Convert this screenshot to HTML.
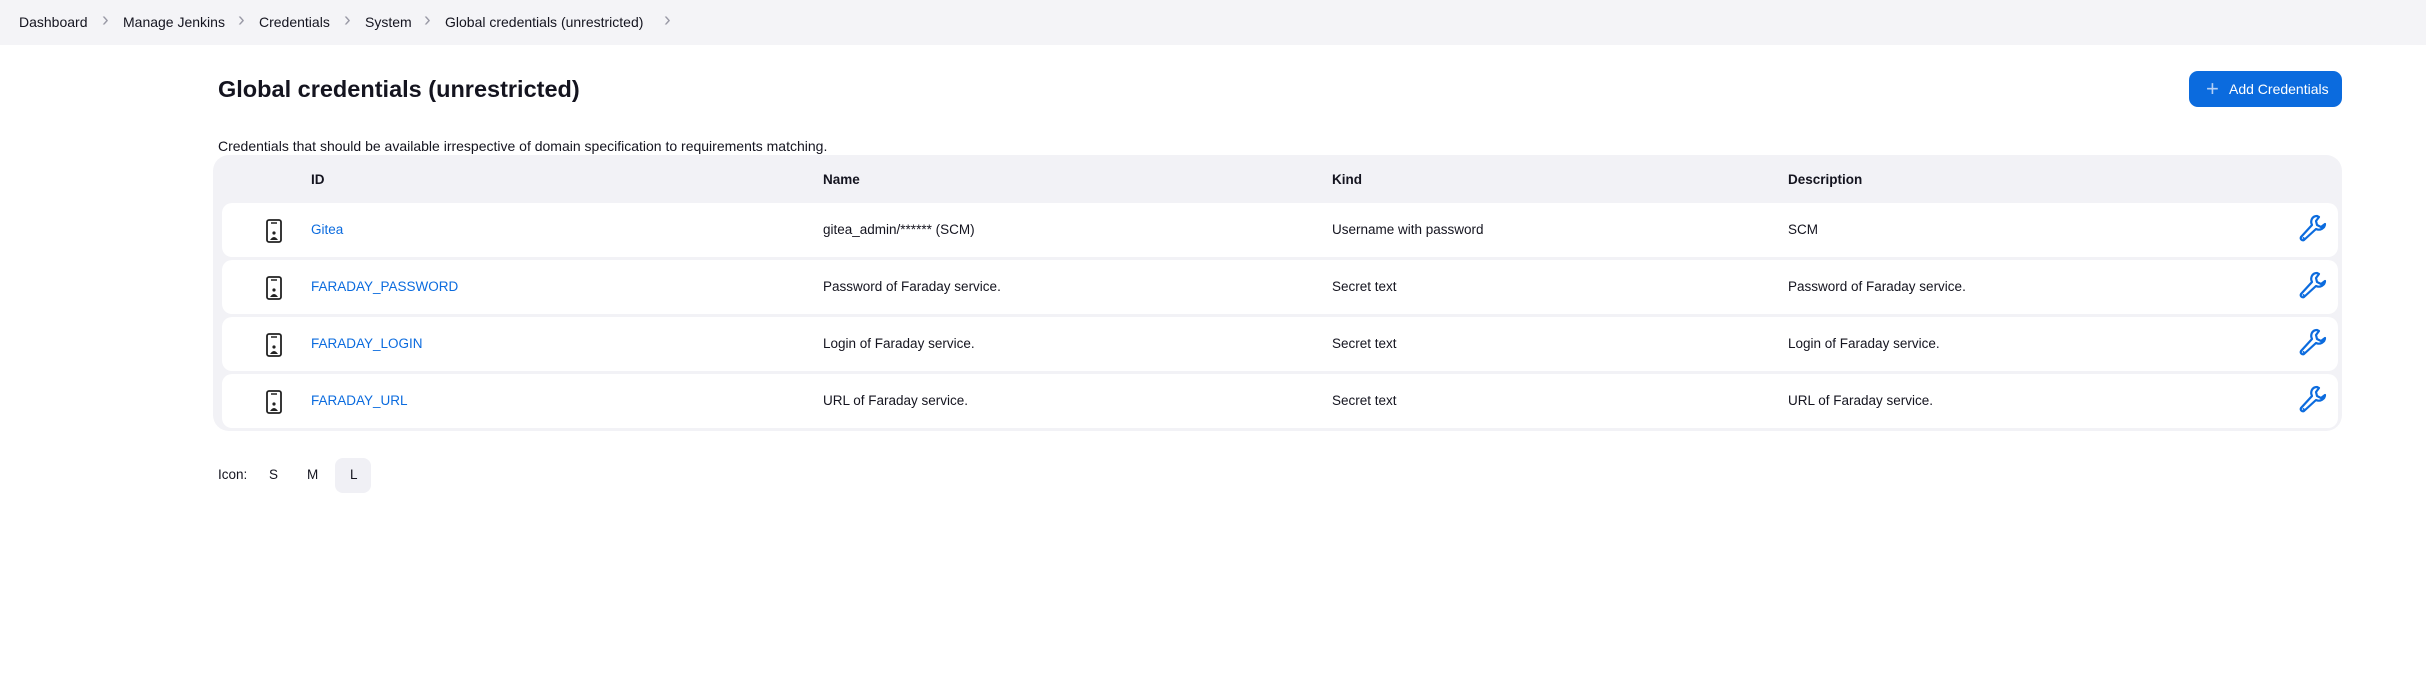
<!DOCTYPE html>
<html><head><meta charset="utf-8"><style>
*{box-sizing:border-box;margin:0;padding:0}
body{width:2426px;height:686px;background:#fff;font-family:"Liberation Sans",sans-serif;color:#14141f;position:relative;overflow:hidden}
.bar{position:absolute;left:0;top:0;width:2426px;height:45px;background:#f4f4f7}
.bc{position:absolute;top:14px;font-size:14px;font-weight:500;color:#14141f;white-space:nowrap}
.sep{position:absolute;top:9px;color:#9a9aa6;font-size:20px;font-weight:300}
h1{position:absolute;left:218px;top:76px;font-size:23.5px;font-weight:600;color:#14141f}
.desc{position:absolute;left:218px;top:138px;font-size:14px}
.btn{position:absolute;left:2189px;top:71px;width:153px;height:36px;background:#0b6bde;border-radius:9px;color:#fff;font-size:14px;font-weight:500}
.tbl{position:absolute;left:213px;top:155px;width:2129px;height:276px;background:#f2f2f6;border-radius:16px}
.th{position:absolute;top:172px;font-size:13.5px;font-weight:600}
.row{position:absolute;left:222px;width:2116px;height:54px;background:#fff;border-radius:10px}
.cell{position:absolute;font-size:13.5px;top:19px}
.link{color:#0b6bde}
.icon{position:absolute;left:43px;top:16px}
.wr{position:absolute;left:2075px;top:10px}
.il{position:absolute;top:467px;font-size:13.5px}
</style></head><body>
<div class="bar"></div>
<span class="bc" style="left:19px">Dashboard</span><span class="sep" style="left:102px">›</span>
<span class="bc" style="left:123px">Manage Jenkins</span><span class="sep" style="left:238px">›</span>
<span class="bc" style="left:259px">Credentials</span><span class="sep" style="left:344px">›</span>
<span class="bc" style="left:365px">System</span><span class="sep" style="left:424px">›</span>
<span class="bc" style="left:445px">Global credentials (unrestricted)</span><span class="sep" style="left:664px">›</span>
<h1>Global credentials (unrestricted)</h1>
<div class="btn"><span style="position:absolute;left:17px;top:5px;font-size:22px;font-weight:300;color:#b5d0f5">+</span><span style="position:absolute;left:40px;top:10px">Add Credentials</span></div>
<div class="desc">Credentials that should be available irrespective of domain specification to requirements matching.</div>
<div class="tbl"></div>
<span class="th" style="left:311px">ID</span>
<span class="th" style="left:823px">Name</span>
<span class="th" style="left:1332px">Kind</span>
<span class="th" style="left:1788px">Description</span>

<div class="row" style="top:203px">
<svg class="icon" width="20" height="24" viewBox="0 0 20 24"><rect x="2" y="1" width="14" height="22" rx="2" fill="none" stroke="#222" stroke-width="1.8"/><line x1="6" y1="4" x2="12" y2="4" stroke="#222" stroke-width="1.5"/><circle cx="9" cy="14" r="1.6" fill="#222"/><path d="M5 21 Q9 15 13 21Z" fill="#222"/></svg>
<span class="cell link" style="left:89px">Gitea</span>
<span class="cell" style="left:601px">gitea_admin/****** (SCM)</span>
<span class="cell" style="left:1110px">Username with password</span>
<span class="cell" style="left:1566px">SCM</span>
<svg class="wr" width="32" height="32" viewBox="0 0 32 32"><path d="M20 3 C15 3 13 8 15 12 L4 24 C3 26 5 28 7 27 L19 16 C23 18 28 15 28 11 L24 14 L20 12 L19 8 L22 4 Z" fill="none" stroke="#0b6bde" stroke-width="2.2" stroke-linejoin="round"/><circle cx="6.5" cy="25" r="1" fill="#0b6bde"/></svg>
</div>
<div class="row" style="top:260px">
<svg class="icon" width="20" height="24" viewBox="0 0 20 24"><rect x="2" y="1" width="14" height="22" rx="2" fill="none" stroke="#222" stroke-width="1.8"/><line x1="6" y1="4" x2="12" y2="4" stroke="#222" stroke-width="1.5"/><circle cx="9" cy="14" r="1.6" fill="#222"/><path d="M5 21 Q9 15 13 21Z" fill="#222"/></svg>
<span class="cell link" style="left:89px">FARADAY_PASSWORD</span>
<span class="cell" style="left:601px">Password of Faraday service.</span>
<span class="cell" style="left:1110px">Secret text</span>
<span class="cell" style="left:1566px">Password of Faraday service.</span>
<svg class="wr" width="32" height="32" viewBox="0 0 32 32"><path d="M20 3 C15 3 13 8 15 12 L4 24 C3 26 5 28 7 27 L19 16 C23 18 28 15 28 11 L24 14 L20 12 L19 8 L22 4 Z" fill="none" stroke="#0b6bde" stroke-width="2.2" stroke-linejoin="round"/><circle cx="6.5" cy="25" r="1" fill="#0b6bde"/></svg>
</div>
<div class="row" style="top:317px">
<svg class="icon" width="20" height="24" viewBox="0 0 20 24"><rect x="2" y="1" width="14" height="22" rx="2" fill="none" stroke="#222" stroke-width="1.8"/><line x1="6" y1="4" x2="12" y2="4" stroke="#222" stroke-width="1.5"/><circle cx="9" cy="14" r="1.6" fill="#222"/><path d="M5 21 Q9 15 13 21Z" fill="#222"/></svg>
<span class="cell link" style="left:89px">FARADAY_LOGIN</span>
<span class="cell" style="left:601px">Login of Faraday service.</span>
<span class="cell" style="left:1110px">Secret text</span>
<span class="cell" style="left:1566px">Login of Faraday service.</span>
<svg class="wr" width="32" height="32" viewBox="0 0 32 32"><path d="M20 3 C15 3 13 8 15 12 L4 24 C3 26 5 28 7 27 L19 16 C23 18 28 15 28 11 L24 14 L20 12 L19 8 L22 4 Z" fill="none" stroke="#0b6bde" stroke-width="2.2" stroke-linejoin="round"/><circle cx="6.5" cy="25" r="1" fill="#0b6bde"/></svg>
</div>
<div class="row" style="top:374px">
<svg class="icon" width="20" height="24" viewBox="0 0 20 24"><rect x="2" y="1" width="14" height="22" rx="2" fill="none" stroke="#222" stroke-width="1.8"/><line x1="6" y1="4" x2="12" y2="4" stroke="#222" stroke-width="1.5"/><circle cx="9" cy="14" r="1.6" fill="#222"/><path d="M5 21 Q9 15 13 21Z" fill="#222"/></svg>
<span class="cell link" style="left:89px">FARADAY_URL</span>
<span class="cell" style="left:601px">URL of Faraday service.</span>
<span class="cell" style="left:1110px">Secret text</span>
<span class="cell" style="left:1566px">URL of Faraday service.</span>
<svg class="wr" width="32" height="32" viewBox="0 0 32 32"><path d="M20 3 C15 3 13 8 15 12 L4 24 C3 26 5 28 7 27 L19 16 C23 18 28 15 28 11 L24 14 L20 12 L19 8 L22 4 Z" fill="none" stroke="#0b6bde" stroke-width="2.2" stroke-linejoin="round"/><circle cx="6.5" cy="25" r="1" fill="#0b6bde"/></svg>
</div>

<span class="il" style="left:218px">Icon:</span>
<span class="il" style="left:269px">S</span>
<span class="il" style="left:307px">M</span>
<div style="position:absolute;left:335px;top:458px;width:36px;height:35px;background:#f0f0f5;border-radius:8px"></div>
<span class="il" style="left:350px">L</span>
</body></html>
